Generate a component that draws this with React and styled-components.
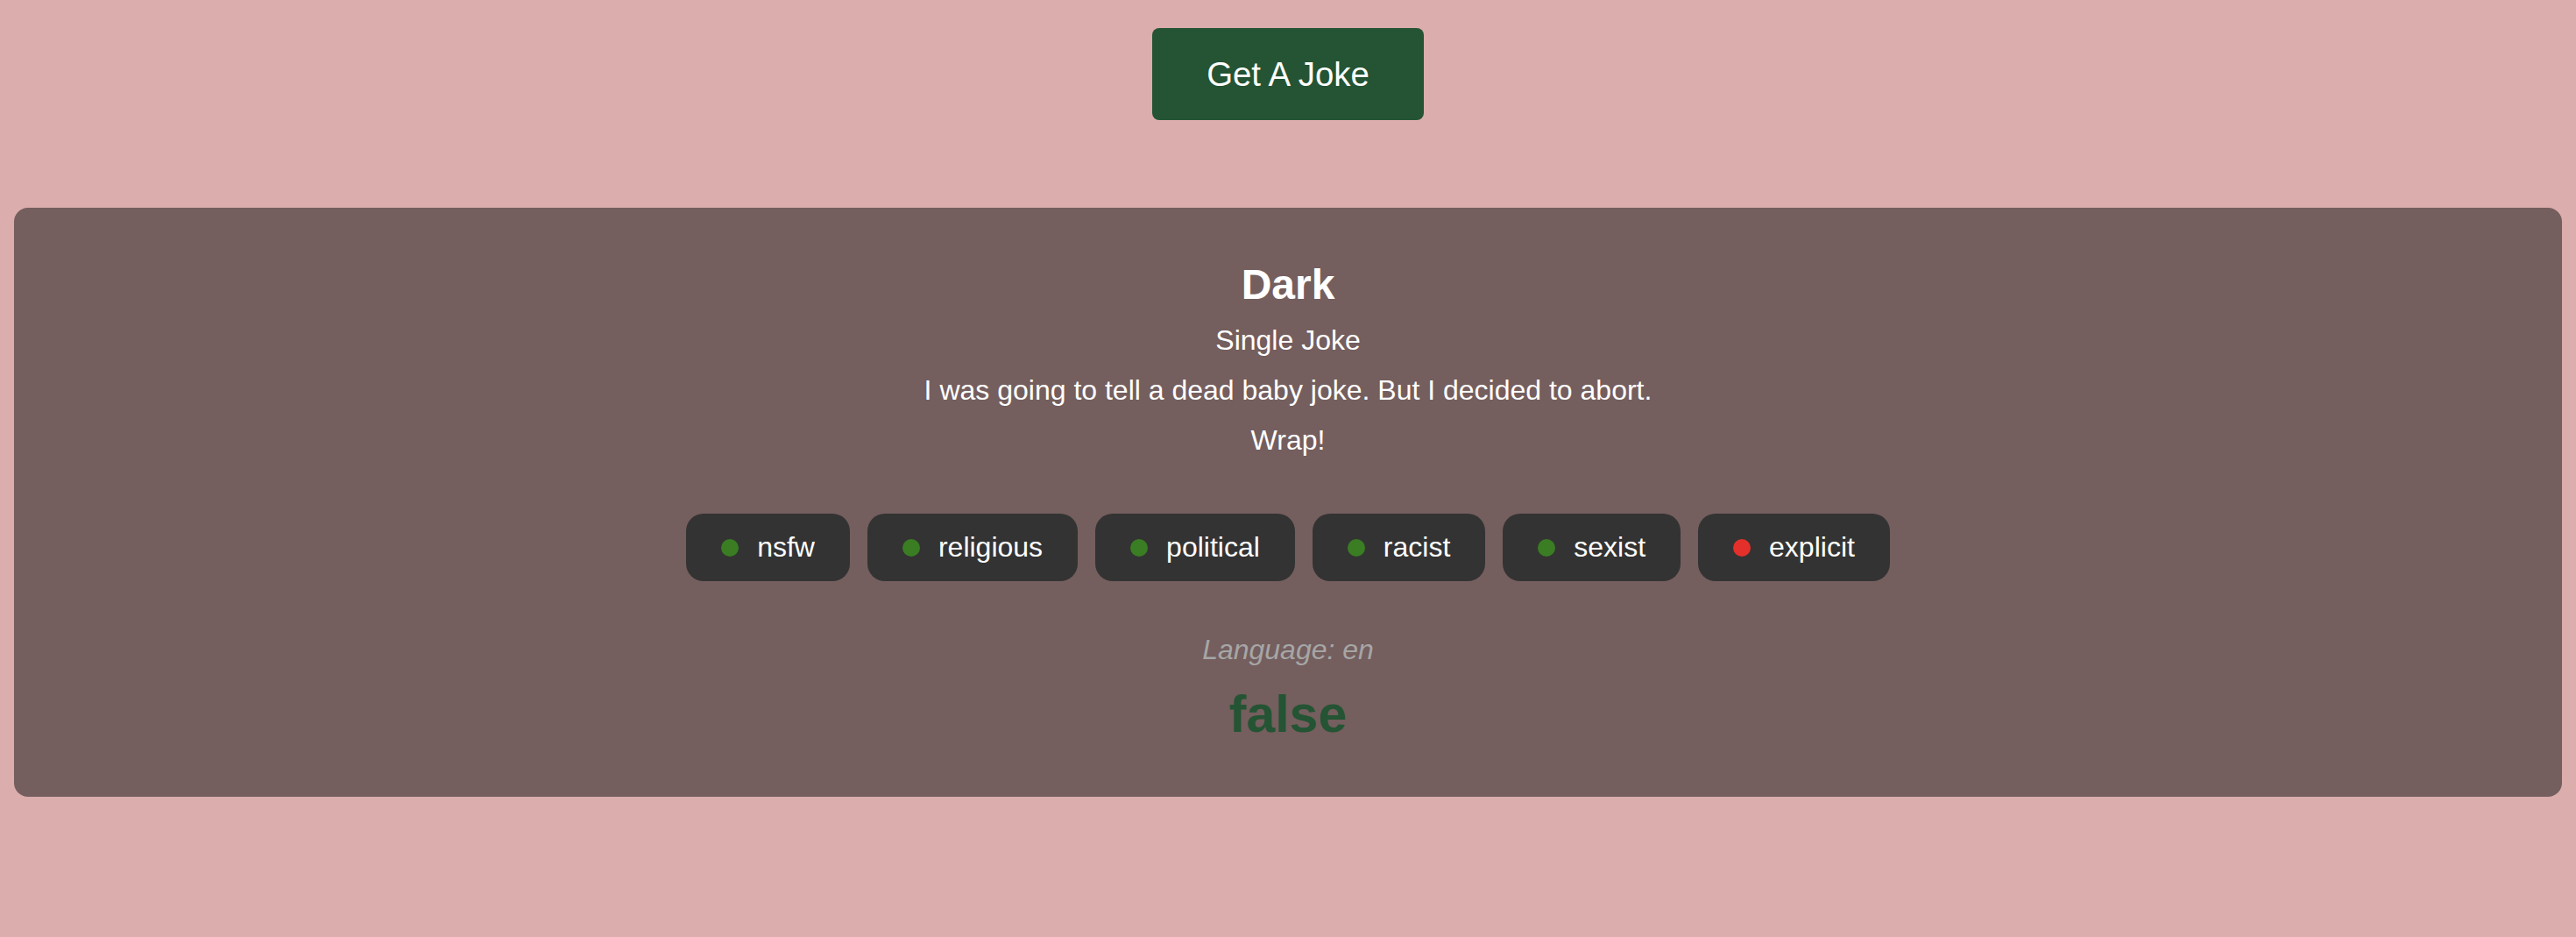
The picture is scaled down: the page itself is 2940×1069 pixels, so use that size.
import React from "react";
import styled, { createGlobalStyle } from "styled-components";

const GlobalStyle = createGlobalStyle`
  html, body {
    margin: 0;
    padding: 0;
    background-color: #dbadad;
    font-family: "Liberation Sans", Arial, sans-serif;
  }
`;

const flags = [
  { name: "nsfw", on: false },
  { name: "religious", on: false },
  { name: "political", on: false },
  { name: "racist", on: false },
  { name: "sexist", on: false },
  { name: "explicit", on: true },
];

const App = () => {
  return (
    <Page>
      <GlobalStyle />
      <JokeButton>Get A Joke</JokeButton>
      <Card>
        <Category>Dark</Category>
        <Line>Single Joke</Line>
        <Line>I was going to tell a dead baby joke. But I decided to abort.</Line>
        <Line>Wrap!</Line>
        <Flags>
          {flags.map((flag) => (
            <Flag key={flag.name}>
              <Dot $on={flag.on} />
              {flag.name}
            </Flag>
          ))}
        </Flags>
        <Language>Language: en</Language>
        <Safe>false</Safe>
      </Card>
    </Page>
  );
};

export default App;

const Page = styled.div`
  min-height: 100vh;
  box-sizing: border-box;
  padding: 32px 16px;
  display: flex;
  flex-direction: column;
  align-items: center;
  gap: 100px;
`;

const JokeButton = styled.button`
  border: none;
  background-color: #245433;
  color: #fff;
  font-family: "Liberation Sans", Arial, sans-serif;
  font-size: 38.4px;
  line-height: 45px;
  padding: 30px 62px;
  border-radius: 8px;
  cursor: pointer;
`;

const Card = styled.div`
  align-self: stretch;
  background-color: #745e5e;
  border-radius: 16px;
  padding: 60px 0;
  display: flex;
  flex-direction: column;
  align-items: center;
  color: #fff;
  text-align: center;
`;

const Category = styled.h2`
  margin: 0 0 18px;
  font-size: 48px;
  font-weight: 700;
  line-height: normal;
`;

const Line = styled.p`
  margin: 0 0 20px;
  font-size: 32px;
  line-height: normal;
`;

const Flags = styled.div`
  display: flex;
  gap: 20px;
  margin-top: 45px;
`;

const Flag = styled.div`
  display: flex;
  align-items: center;
  gap: 21px;
  background-color: #333333;
  border-radius: 20px;
  padding: 20px 40px;
  font-size: 32px;
  line-height: normal;
`;

const Dot = styled.span`
  width: 20px;
  height: 20px;
  border-radius: 50%;
  background-color: ${(p) => (p.$on ? "#e3302a" : "#3a7d23")};
`;

const Language = styled.p`
  margin: 60px 0 21px;
  font-size: 32px;
  font-style: italic;
  color: #a6a6a6;
  line-height: normal;
`;

const Safe = styled.p`
  margin: 0;
  font-size: 59px;
  font-weight: 700;
  color: #245433;
  line-height: normal;
`;
